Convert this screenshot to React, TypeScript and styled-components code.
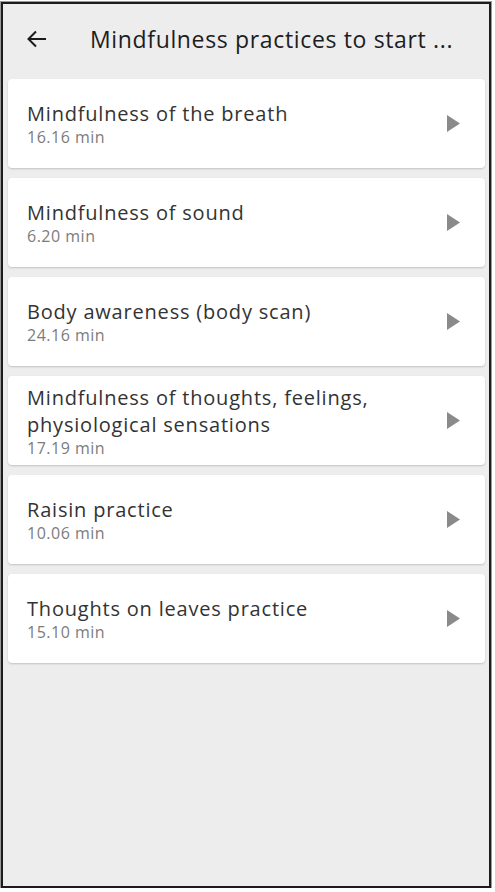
import React from "react";
import styled, { createGlobalStyle } from "styled-components";

const Global = createGlobalStyle`
  html, body { margin: 0; padding: 0; background: #ffffff; }
  * { box-sizing: border-box; }
`;

const Frame = styled.div`
  margin: 2px 0 0 1px;
  width: 490px;
  height: 886px;
  border: 2px solid #1c1c1c;
  box-shadow: 0 0 0 1px #9a9a9a;
  background: #ededed;
  display: flex;
  flex-direction: column;
  font-family: "Open Sans", "Liberation Sans", sans-serif;
`;

const Header = styled.header`
  height: 73px;
  display: flex;
  align-items: center;
  padding: 0 0 4px 23px;
`;

const BackButton = styled.button`
  border: none;
  background: none;
  padding: 0;
  width: 22px;
  height: 22px;
  display: flex;
  align-items: center;
  justify-content: center;
  color: #1a1a1a;
`;

const Title = styled.h1`
  margin: 0 0 0 42px;
  font-size: 23px;
  letter-spacing: 0.65px;
  font-weight: 400;
  color: #1d1d1d;
  white-space: nowrap;
`;

const List = styled.div`
  display: flex;
  flex-direction: column;
  gap: 10px;
  padding: 2px 4px 0 5px;
`;

const Card = styled.div`
  min-height: 89px;
  background: #ffffff;
  border-radius: 4px;
  box-shadow: 0 1px 2px rgba(0, 0, 0, 0.18);
  display: flex;
  align-items: center;
  padding: 7px 25px 7px 19px;
`;

const Info = styled.div`
  flex: 1;
  display: flex;
  flex-direction: column;
`;

const Name = styled.div`
  font-size: 20px;
  letter-spacing: 0.8px;
  line-height: 27px;
  color: #333333;
  max-width: 400px;
`;

const Duration = styled.div`
  font-size: 16px;
  letter-spacing: 0.5px;
  line-height: 20px;
  color: #7c7c7c;
`;

const PlayIcon = styled.svg`
  width: 13px;
  height: 17px;
  flex: none;
`;

const items = [
  { name: "Mindfulness of the breath", time: "16.16 min" },
  { name: "Mindfulness of sound", time: "6.20 min" },
  { name: "Body awareness (body scan)", time: "24.16 min" },
  { name: "Mindfulness of thoughts, feelings, physiological sensations", time: "17.19 min" },
  { name: "Raisin practice", time: "10.06 min" },
  { name: "Thoughts on leaves practice", time: "15.10 min" },
];

export default function App() {
  return (
    <>
      <Global />
      <Frame>
        <Header>
          <BackButton aria-label="back">
            <svg width="20" height="18" viewBox="0 0 20 18" fill="none" stroke="#1a1a1a" strokeWidth="2">
              <path d="M19 9H2M9 1.5L1.5 9L9 16.5" />
            </svg>
          </BackButton>
          <Title>Mindfulness practices to start ...</Title>
        </Header>
        <List>
          {items.map((it) => (
            <Card key={it.name}>
              <Info>
                <Name>{it.name}</Name>
                <Duration>{it.time}</Duration>
              </Info>
              <PlayIcon viewBox="0 0 13 17">
                <path d="M0 0L13 8.5L0 17Z" fill="#8a8a8a" />
              </PlayIcon>
            </Card>
          ))}
        </List>
      </Frame>
    </>
  );
}
